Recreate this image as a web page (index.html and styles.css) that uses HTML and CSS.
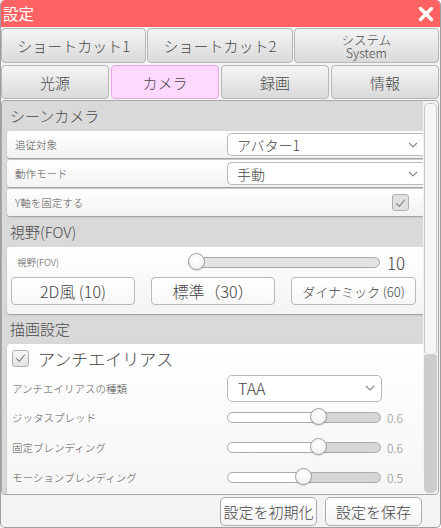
FILE: index.html
```html
<!DOCTYPE html>
<html lang="ja">
<head>
<meta charset="utf-8">
<title>設定</title>
<link rel="stylesheet" href="styles.css">
</head>
<body>
<div class="win">
  <div class="title">
    <span class="title-text">設定</span>
    <svg class="close" width="16" height="16" viewBox="0 0 16 16"><path d="M2.5 2.5 L13.5 13.5 M13.5 2.5 L2.5 13.5" stroke="#fff" stroke-width="3.4" stroke-linecap="round"/></svg>
  </div>
  <div class="tabs tabs3">
    <div class="tab">ショートカット1</div>
    <div class="tab">ショートカット2</div>
    <div class="tab two"><span class="t1">システム</span><span class="t2">System</span></div>
  </div>
  <div class="tabs tabs4">
    <div class="tab">光源</div>
    <div class="tab active">カメラ</div>
    <div class="tab">録画</div>
    <div class="tab">情報</div>
  </div>
  <div class="panel">
    <div class="scroll">
      <div class="sec">シーンカメラ</div>
      <div class="row">
        <span class="lbl">追従対象</span>
        <div class="select wide"><span>アバター1</span><svg class="chev" width="10" height="6" viewBox="0 0 10 6"><polyline points="1,1 5,5 9,1" fill="none" stroke="#888" stroke-width="1.1"/></svg></div>
      </div>
      <div class="row">
        <span class="lbl">動作モード</span>
        <div class="select wide"><span>手動</span><svg class="chev" width="10" height="6" viewBox="0 0 10 6"><polyline points="1,1 5,5 9,1" fill="none" stroke="#888" stroke-width="1.1"/></svg></div>
      </div>
      <div class="row last">
        <span class="lbl">Y軸を固定する</span>
        <div class="spacer"></div>
        <div class="check gray"><svg width="16" height="16" viewBox="0 0 16 16"><polyline points="3.5,8.5 6.8,11.5 12.5,4.5" fill="none" stroke="#777" stroke-width="1.1"/></svg></div>
      </div>
      <div class="sec">視野(FOV)</div>
      <div class="card fov">
        <div class="srow">
          <span class="slbl">視野(FOV)</span>
          <div class="slider long" style="--p:4%"><span class="thumb"></span></div>
          <span class="big-val">10</span>
        </div>
        <div class="btns">
          <div class="btn">2D風 (10)</div>
          <div class="btn">標準（30）</div>
          <div class="btn small">ダイナミック (60)</div>
        </div>
      </div>
      <div class="sec">描画設定</div>
      <div class="card lower">
        <div class="aa">
          <div class="check"><svg width="16" height="16" viewBox="0 0 16 16"><polyline points="3.5,8.5 6.8,11.5 12.5,4.5" fill="none" stroke="#777" stroke-width="1.1"/></svg></div>
          <span class="aa-text">アンチエイリアス</span>
        </div>
        <div class="lrow sel">
          <span class="llbl">アンチエイリアスの種類</span>
          <div class="select boxed"><span>TAA</span><svg class="chev" width="10" height="6" viewBox="0 0 10 6"><polyline points="1,1 5,5 9,1" fill="none" stroke="#888" stroke-width="1.1"/></svg></div>
        </div>
        <div class="lrow">
          <span class="llbl">ジッタスプレッド</span>
          <div class="slider" style="--p:60%"><span class="thumb"></span></div>
          <span class="val">0.6</span>
        </div>
        <div class="lrow">
          <span class="llbl">固定ブレンディング</span>
          <div class="slider" style="--p:60%"><span class="thumb"></span></div>
          <span class="val">0.6</span>
        </div>
        <div class="lrow">
          <span class="llbl">モーションブレンディング</span>
          <div class="slider" style="--p:50%"><span class="thumb"></span></div>
          <span class="val">0.5</span>
        </div>
      </div>
    </div>
    <div class="sbar"><div class="sthumb"></div></div>
  </div>
  <div class="footer">
    <div class="fbtn">設定を初期化</div>
    <div class="fbtn">設定を保存</div>
  </div>
</div>
</body>
</html>
```
FILE: styles.css
```css
* { box-sizing: border-box; margin: 0; padding: 0; }
html, body { width: 441px; height: 528px; overflow: hidden; background: #ffffff; }
body { font-family: "Noto Sans CJK JP", sans-serif; font-weight: 300; color: #4a4a4a; }

.win {
  width: 441px; height: 528px;
  background: #f3f3f3;
  border: 1px solid #9e9e9e; border-top: none;
  border-radius: 5px;
  display: flex; flex-direction: column;
  overflow: hidden;
}

.title {
  height: 27px; flex: none;
  margin: 0 -1px;
  background: #ff6262;
  border-radius: 5px 5px 0 0;
  display: flex; align-items: center; justify-content: space-between;
  padding: 0 7px 0 3px;
  color: #fff;
}
.title-text { font-size: 15.5px; line-height: 1; font-weight: 400; }
.close { display: block; }

.tabs { display: grid; gap: 1px; padding-right: 1px; flex: none; }
.tabs3 { grid-template-columns: repeat(3, 1fr); height: 35px; margin-top: 1px; }
.tabs4 { grid-template-columns: repeat(4, 1fr); gap: 2px; height: 34px; margin-top: 2px; }
.tab {
  display: flex; align-items: center; justify-content: center;
  background: linear-gradient(#f5f5f5, #dadada);
  border: 1px solid #b6b6b6;
  border-radius: 4px;
  font-size: 15px; color: #484848;
  line-height: 1;
}
.tab.two { flex-direction: column; gap: 0; padding-top: 1px; }
.tab.two .t1 { font-size: 12.5px; line-height: 13px; }
.tab.two .t2 { font-size: 12.5px; line-height: 13px; }
.tab.active { background: #ffd8ff; border-color: #e6a6e6; }

.panel {
  flex: none;
  height: 395px;
  margin: 1px 1px 0 0;
  border: 1px solid #a8a8a8;
  border-radius: 4px;
  display: flex;
  overflow: hidden;
  background: #d9d9d9;
}
.scroll { width: 421px; flex: none; overflow: hidden; background: #d9d9d9; }
.sbar { flex: 1; padding: 2px 1px 1px 1px; background: #f3f3f3; display: flex; flex-direction: column; }
.sbar::after { content: ""; flex: 1; background: #cdcdcd; border-radius: 0 0 5px 5px; }
.sthumb {
  height: 252px; flex: none;
  background: #f6f6f6;
  border: 1px solid #c9c9c9;
  border-radius: 5px;
}

.sec { height: 30px; line-height: 30px; padding-left: 8px; font-size: 15px; color: #4a4a4a; }

.row {
  margin: 0 0 2px 5px;
  height: 27px;
  display: flex; align-items: center;
  padding-left: 8px;
  background: linear-gradient(#ffffff, #f2f2f2);
  border-radius: 3px 0 0 3px;
  box-shadow: 0 1px 1.5px rgba(0,0,0,0.3);
}
.row.last { margin-bottom: 1px; }
.lbl { width: 212px; font-size: 10.5px; color: #555; flex: none; }
.spacer { flex: 1; }

.select {
  display: flex; align-items: center; justify-content: space-between;
  background: #fff;
  border: 1px solid #b8b8b8;
  font-size: 14px; color: #444;
}
.select.wide {
  flex: 1; height: 23px;
  border-right: none;
  border-radius: 5px 0 0 5px;
  padding: 0 5px 0 9px;
}
.chev { display: block; }

.check {
  width: 17px; height: 17px;
  border: 1px solid #b0b0b0;
  border-radius: 3px;
  background: linear-gradient(#f6f6f6, #e2e2e2);
  display: flex; align-items: center; justify-content: center;
}
.check.gray { background: #e0e0e0; margin-right: 14px; }

.card {
  margin-left: 5px;
  background: linear-gradient(#ffffff, #f3f3f3);
  border-radius: 3px 0 0 3px;
  box-shadow: 0 1px 1.5px rgba(0,0,0,0.3);
}
.fov { height: 67px; padding: 4px 0 0 4px; }
.srow { height: 22px; display: flex; align-items: center; }
.slbl { width: 177px; padding-left: 6px; font-size: 9.5px; color: #555; flex: none; }
.big-val { margin-left: 7px; font-size: 17px; color: #444; }

.slider {
  position: relative;
  width: 154px; height: 11px; flex: none;
  border: 1px solid #a9a9a9;
  border-radius: 6px;
  background: linear-gradient(to right, #ffffff var(--p), #d6d6d6 var(--p));
}
.slider.long { width: 192px; background: #e2e2e2; }
.thumb {
  position: absolute;
  top: -5px;
  left: calc(var(--p) - 9px);
  width: 17px; height: 17px;
  border-radius: 50%;
  border: 1px solid #9c9c9c;
  background: radial-gradient(circle at 50% 35%, #ffffff, #eeeeee);
  box-shadow: 0 1px 1px rgba(0,0,0,0.15);
}

.btns { display: flex; gap: 16px; margin-top: 4px; }
.btn {
  width: 124px; height: 28px;
  display: flex; align-items: center; justify-content: center;
  background: linear-gradient(#ffffff, #f7f7f7);
  border: 1px solid #b9b9b9;
  border-radius: 4px;
  font-size: 16px; color: #444;
}
.btn.small { font-size: 13px; width: 125px; }

.lower {
  height: 160px;
  padding: 4px 0 0 5px;
  background: linear-gradient(#ffffff, #f5f5f5);
}
.aa { height: 20px; display: flex; align-items: center; gap: 9px; }
.aa-text { font-size: 17px; color: #444; }
.lrow { height: 30px; display: flex; align-items: center; }
.lrow.sel { margin-top: 6px; height: 28px; }
.llbl { width: 215px; flex: none; font-size: 10.5px; color: #555; }
.select.boxed {
  width: 155px; height: 27px;
  border-radius: 5px;
  padding: 0 6px 0 10px;
  font-size: 16px;
}
.val { margin-left: 6px; font-size: 12px; color: #8a8a8a; }

.footer {
  flex: 1;
  display: flex; justify-content: flex-end; align-items: flex-start;
  gap: 8px;
  padding: 2px 18px 0 0;
}
.fbtn {
  width: 97px; height: 29px;
  display: flex; align-items: center; justify-content: center;
  background: linear-gradient(#ffffff, #f4f4f4);
  border: 1px solid #ababab;
  border-radius: 5px;
  font-size: 15px; color: #444;
}
```
